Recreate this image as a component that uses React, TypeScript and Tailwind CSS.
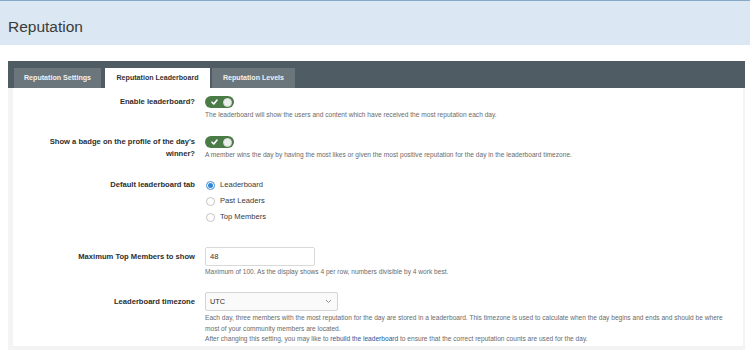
import React from "react";

const font = { fontFamily: '"Liberation Sans", Arial, sans-serif' };

function Toggle() {
  return (
    <div className="relative flex h-[12px] w-[29px] items-center rounded-full bg-[#4b7c48]">
      <svg
        className="ml-[6px]"
        width="7"
        height="6"
        viewBox="0 0 7 6"
        fill="none"
      >
        <path
          d="M1 3.2 L2.8 5 L6 1"
          stroke="#ffffff"
          strokeWidth="1.6"
          strokeLinecap="round"
          strokeLinejoin="round"
        />
      </svg>
      <div className="absolute right-[2px] top-[1.5px] h-[9px] w-[9px] rounded-full border border-[#d6d9d6] bg-[#eceeec]" />
    </div>
  );
}

function Radio({ label, checked }: { label: string; checked?: boolean }) {
  return (
    <div className="flex h-[16px] items-center">
      <div
        className={
          checked
            ? "ml-[1px] flex h-[9px] w-[9px] items-center justify-center rounded-full border border-[#3c8dd8] bg-white"
            : "ml-[1px] h-[9px] w-[9px] rounded-full border border-[#c4c4c4] bg-white"
        }
      >
        {checked ? (
          <div className="h-[5px] w-[5px] rounded-full bg-[#2f85d6]" />
        ) : null}
      </div>
      <span className="ml-[5px] text-[7.6px] text-[#3a3a3a]">{label}</span>
    </div>
  );
}

function Row({
  label,
  leading,
  children,
  className,
}: {
  label: React.ReactNode;
  leading: string;
  children: React.ReactNode;
  className?: string;
}) {
  return (
    <div className={`flex ${className ?? ""}`}>
      <div
        className={`w-[182px] shrink-0 pl-[20px] text-right text-[7.6px] font-bold text-[#2e2e2e] ${leading}`}
      >
        {label}
      </div>
      <div className="ml-[10px] flex-1">{children}</div>
    </div>
  );
}

export default function App() {
  return (
    <div className="h-[350px] w-[750px] overflow-hidden bg-white" style={font}>
      <div className="flex h-[45px] items-center border-t border-[#86a9ca] bg-[#dbe7f2] pl-[8px]">
        <h1 className="mt-[7px] text-[15.5px] text-[#3b3b3b]">Reputation</h1>
      </div>

      <div className="ml-[8px] mr-[5px] mt-[16px]">
        <div className="flex h-[27px] items-end bg-[#505c63] pl-[6px]">
          <div className="flex h-[20px] w-[87px] items-center justify-center bg-[#6a757c] text-[7.1px] font-bold text-[#f1f1f1]">
            Reputation Settings
          </div>
          <div className="ml-[4px] flex h-[20px] w-[105px] items-center justify-center bg-white text-[7.1px] font-bold text-[#333]">
            Reputation Leaderboard
          </div>
          <div className="ml-[2px] flex h-[20px] w-[83px] items-center justify-center bg-[#6a757c] text-[7.1px] font-bold text-[#f1f1f1]">
            Reputation Levels
          </div>
        </div>

        <div className="bg-[#f4f4f4] pl-[5px] pr-[2px]">
          <div className="bg-white pb-[1px] pt-[8px]">
            <Row label="Enable leaderboard?" leading="leading-[12px]">
              <Toggle />
              <p className="mt-[2px] text-[6.6px] leading-[10px] text-[#6b6b6b]">
                The leaderboard will show the users and content which have
                received the most reputation each day.
              </p>
            </Row>

            <Row
              className="mt-[16px]"
              label={
                <>
                  Show a badge on the profile of the day's
                  <br />
                  winner?
                </>
              }
              leading="leading-[11.5px]"
            >
              <Toggle />
              <p className="mt-[2px] text-[6.6px] leading-[10px] text-[#6b6b6b]">
                A member wins the day by having the most likes or given the
                most positive reputation for the day in the leaderboard
                timezone.
              </p>
            </Row>

            <Row
              className="mt-[17px]"
              label="Default leaderboard tab"
              leading="leading-[16px]"
            >
              <Radio label="Leaderboard" checked />
              <Radio label="Past Leaders" />
              <Radio label="Top Members" />
            </Row>

            <Row
              className="mt-[22px]"
              label="Maximum Top Members to show"
              leading="leading-[19px]"
            >
              <div className="flex h-[19px] w-[110px] items-center rounded-[2px] border border-[#d9d9d9] bg-white pl-[4px] text-[7.6px] text-[#333]">
                48
              </div>
              <p className="mt-[1px] text-[6.6px] leading-[10px] text-[#6b6b6b]">
                Maximum of 100. As the display shows 4 per row, numbers
                divisible by 4 work best.
              </p>
            </Row>

            <Row
              className="mt-[15px]"
              label="Leaderboard timezone"
              leading="leading-[19px]"
            >
              <div className="flex h-[19px] w-[133px] items-center justify-between rounded-[2px] border border-[#d4d4d4] bg-[#fafafa] pl-[4px] pr-[5px] text-[7.4px] text-[#333]">
                <span>UTC</span>
                <svg width="7" height="5" viewBox="0 0 7 5" fill="none">
                  <path
                    d="M1 1 L3.5 3.6 L6 1"
                    stroke="#8a8a8a"
                    strokeWidth="0.9"
                  />
                </svg>
              </div>
              <p className="mt-[2px] whitespace-nowrap text-[6.6px] leading-[10.5px] text-[#6b6b6b]">
                Each day, three members with the most reputation for the day
                are stored in a leaderboard. This timezone is used to
                calculate when the day begins and ends and should be where
                <br />
                most of your community members are located.
                <br />
                After changing this setting, you may like to{" "}
                <span className="text-[#2a5a9c]">rebuild the leaderboard</span>{" "}
                to ensure that the correct reputation counts are used for the
                day.
              </p>
            </Row>
          </div>
          <div className="h-[10px] bg-[#f3f3f3]" />
        </div>
      </div>
    </div>
  );
}
